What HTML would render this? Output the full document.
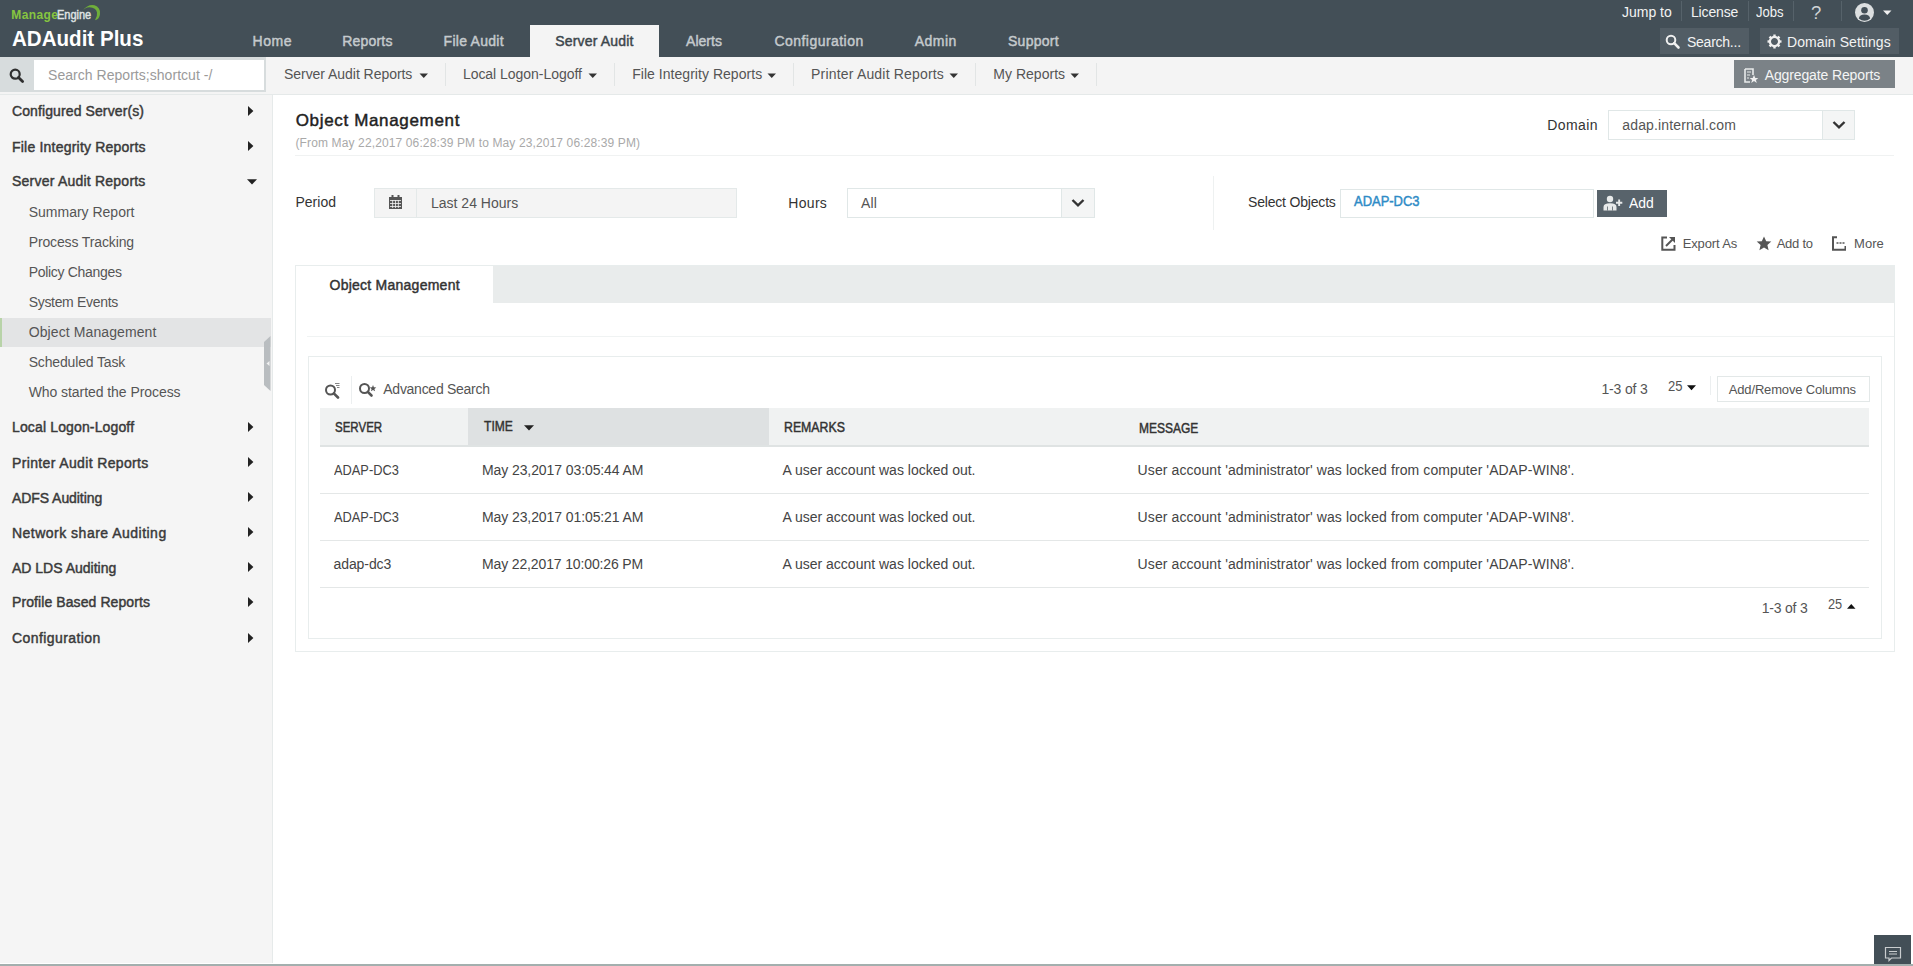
<!DOCTYPE html>
<html><head><meta charset="utf-8">
<style>
*{box-sizing:border-box;margin:0;padding:0}
html,body{width:1913px;height:966px;overflow:hidden;background:#fff;font-family:"Liberation Sans",sans-serif;color:#333}
.b{position:absolute}
.t{position:absolute;white-space:pre;line-height:1}
</style></head><body>
<!-- header -->
<div class="b" style="left:0;top:0;width:1913px;height:57px;background:#434f57"></div>
<svg class="b" style="left:80px;top:3px" width="22" height="19" viewBox="0 0 22 19"><path d="M2.4 8 Q8 0.8 14.5 2.3 Q20.5 4.2 20 11 Q19.5 16.5 15 17.2 Q17.6 13.5 17 9.5 Q16 4.5 9.5 4.2 Q5 4.5 2.4 8 Z" fill="#6fae3a"/></svg>
<div class="b" style="left:530px;top:25px;width:129px;height:32px;background:#f4f4f4"></div>
<div class="b" style="left:1681px;top:1px;width:1px;height:20px;background:#56626a"></div>
<div class="b" style="left:1748px;top:1px;width:1px;height:20px;background:#56626a"></div>
<div class="b" style="left:1793px;top:1px;width:1px;height:20px;background:#56626a"></div>
<div class="b" style="left:1841px;top:1px;width:1px;height:20px;background:#56626a"></div>
<svg class="b" style="left:1855px;top:3px" width="19" height="19" viewBox="0 0 19 19"><circle cx="9.5" cy="9.5" r="9.5" fill="#dcdfe0"/><circle cx="9.5" cy="7.3" r="3.3" fill="#434f57"/><path d="M3.8 15.5 Q4.5 11.5 9.5 11.5 Q14.5 11.5 15.2 15.5 Q12.5 17.8 9.5 17.8 Q6.5 17.8 3.8 15.5Z" fill="#434f57"/></svg>
<svg class="b" style="left:1883px;top:10px" width="9" height="6" viewBox="0 0 9 6"><path d="M0 0.5H8.5L4.25 5Z" fill="#f0f0f0"/></svg>
<div class="b" style="left:1660px;top:28px;width:89px;height:26px;background:#525d65"></div>
<svg class="b" style="left:1665px;top:34px" width="16" height="16" viewBox="0 0 16 16"><circle cx="6" cy="6" r="4.3" fill="none" stroke="#f0f0f0" stroke-width="2"/><path d="M9.2 9.2L13.5 13.5" stroke="#f0f0f0" stroke-width="2.6" stroke-linecap="round"/></svg>
<div class="b" style="left:1760px;top:28px;width:139px;height:26px;background:#525d65"></div>
<svg class="b" style="left:1767px;top:34px" width="15" height="15" viewBox="0 0 15 15"><g transform="translate(7.5 7.5)"><circle r="4.6" fill="none" stroke="#f0f0f0" stroke-width="2.2"/><g fill="#f0f0f0"><rect x="-1.2" y="-7" width="2.4" height="3"/><rect x="-1.2" y="4" width="2.4" height="3"/><rect x="-7" y="-1.2" width="3" height="2.4"/><rect x="4" y="-1.2" width="3" height="2.4"/><g transform="rotate(45)"><rect x="-1.2" y="-7" width="2.4" height="3"/><rect x="-1.2" y="4" width="2.4" height="3"/><rect x="-7" y="-1.2" width="3" height="2.4"/><rect x="4" y="-1.2" width="3" height="2.4"/></g></g></g></svg>
<!-- bar2 -->
<div class="b" style="left:0;top:57px;width:1913px;height:38px;background:#f4f4f4;border-bottom:1px solid #e5e9e9"></div>
<div class="b" style="left:0;top:57px;width:266px;height:35px;background:#d7dcdd"></div>
<div class="b" style="left:34px;top:59.5px;width:230px;height:30px;background:#fff"></div>
<svg class="b" style="left:9px;top:68px" width="16" height="16" viewBox="0 0 16 16"><circle cx="6.2" cy="6.2" r="4.5" fill="none" stroke="#2f2f2f" stroke-width="2.2"/><path d="M9.5 9.5L13.6 13.6" stroke="#2f2f2f" stroke-width="2.8" stroke-linecap="round"/></svg>
<svg class="b" style="left:419px;top:73px" width="10" height="6" viewBox="0 0 10 6"><path d="M0.5 0.5H9L4.75 5Z" fill="#333"/></svg>
<svg class="b" style="left:588px;top:73px" width="10" height="6" viewBox="0 0 10 6"><path d="M0.5 0.5H9L4.75 5Z" fill="#333"/></svg>
<svg class="b" style="left:767px;top:73px" width="10" height="6" viewBox="0 0 10 6"><path d="M0.5 0.5H9L4.75 5Z" fill="#333"/></svg>
<svg class="b" style="left:949px;top:73px" width="10" height="6" viewBox="0 0 10 6"><path d="M0.5 0.5H9L4.75 5Z" fill="#333"/></svg>
<svg class="b" style="left:1070px;top:73px" width="10" height="6" viewBox="0 0 10 6"><path d="M0.5 0.5H9L4.75 5Z" fill="#333"/></svg>
<div class="b" style="left:445px;top:63px;width:1px;height:23px;background:#e2e5e5"></div>
<div class="b" style="left:614px;top:63px;width:1px;height:23px;background:#e2e5e5"></div>
<div class="b" style="left:793px;top:63px;width:1px;height:23px;background:#e2e5e5"></div>
<div class="b" style="left:975px;top:63px;width:1px;height:23px;background:#e2e5e5"></div>
<div class="b" style="left:1096px;top:63px;width:1px;height:23px;background:#e2e5e5"></div>
<div class="b" style="left:1734px;top:60px;width:161px;height:27.5px;background:#7b8287"></div>
<svg class="b" style="left:1744px;top:68px" width="15" height="16" viewBox="0 0 15 16"><path d="M1 1H9V7M1 1V14H6" fill="none" stroke="#e8eaea" stroke-width="1.6"/><path d="M3 4H7M3 7H6M3 10H5" stroke="#e8eaea" stroke-width="1.2"/><path d="M10 7L11.3 10H14.3L11.9 11.9L12.8 15L10 13.1L7.2 15L8.1 11.9L5.7 10H8.7Z" fill="#f0f0f0"/></svg>
<!-- sidebar -->
<div class="b" style="left:0;top:95px;width:273px;height:868px;background:#f5f5f5;border-right:1px solid #e6eaea"></div>
<div class="b" style="left:0;top:318px;width:271px;height:29px;background:#e3e4e5;border-left:2px solid #b8d3a8"></div>
<svg class="b" style="left:264px;top:336px" width="7" height="55" viewBox="0 0 7 55"><path d="M0 6L6.5 0V55L0 49Z" fill="#b9bdc0"/><path d="M2.5 27.5L5.5 25V30Z" fill="#f2f2f2"/></svg>
<svg class="b" style="left:247.8px;top:105.5px" width="6" height="10" viewBox="0 0 6 10"><path d="M0 0L5.4 5L0 10Z" fill="#222"/></svg>
<svg class="b" style="left:247.8px;top:141.1px" width="6" height="10" viewBox="0 0 6 10"><path d="M0 0L5.4 5L0 10Z" fill="#222"/></svg>
<svg class="b" style="left:247.8px;top:421.5px" width="6" height="10" viewBox="0 0 6 10"><path d="M0 0L5.4 5L0 10Z" fill="#222"/></svg>
<svg class="b" style="left:247.8px;top:457.3px" width="6" height="10" viewBox="0 0 6 10"><path d="M0 0L5.4 5L0 10Z" fill="#222"/></svg>
<svg class="b" style="left:247.8px;top:492.4px" width="6" height="10" viewBox="0 0 6 10"><path d="M0 0L5.4 5L0 10Z" fill="#222"/></svg>
<svg class="b" style="left:247.8px;top:527.1px" width="6" height="10" viewBox="0 0 6 10"><path d="M0 0L5.4 5L0 10Z" fill="#222"/></svg>
<svg class="b" style="left:247.8px;top:562.2px" width="6" height="10" viewBox="0 0 6 10"><path d="M0 0L5.4 5L0 10Z" fill="#222"/></svg>
<svg class="b" style="left:247.8px;top:597.0px" width="6" height="10" viewBox="0 0 6 10"><path d="M0 0L5.4 5L0 10Z" fill="#222"/></svg>
<svg class="b" style="left:247.8px;top:632.7px" width="6" height="10" viewBox="0 0 6 10"><path d="M0 0L5.4 5L0 10Z" fill="#222"/></svg>
<svg class="b" style="left:247px;top:178.5px" width="10" height="6" viewBox="0 0 10 6"><path d="M0 0.3H10L5 5.5Z" fill="#222"/></svg>
<!-- content top -->
<div class="b" style="left:295px;top:155px;width:1599px;height:1px;background:#f0f2f2"></div>
<div class="b" style="left:1608px;top:110px;width:247px;height:30px;background:#fff;border:1px solid #e0e7e7"></div>
<div class="b" style="left:1822px;top:111px;width:32px;height:28px;background:#f4f5f5;border-left:1px solid #e0e7e7"></div>
<svg class="b" style="left:1832px;top:120px" width="14" height="10" viewBox="0 0 14 10"><path d="M1.5 2L7 7.3L12.5 2" fill="none" stroke="#333" stroke-width="2.4"/></svg>
<div class="b" style="left:374px;top:188px;width:363px;height:30px;background:#f4f4f4;border:1px solid #e4e9e9"></div>
<div class="b" style="left:416px;top:189px;width:1px;height:28px;background:#e4e9e9"></div>
<svg class="b" style="left:388.5px;top:195px" width="13" height="14" viewBox="0 0 13 14"><rect x="0" y="2" width="13" height="12" fill="#555"/><rect x="2.5" y="0" width="2" height="3.5" fill="#555"/><rect x="8.5" y="0" width="2" height="3.5" fill="#555"/><g fill="#f4f4f4"><rect x="1" y="5" width="11" height="0.8"/><rect x="1" y="8" width="11" height="0.8"/><rect x="1" y="11" width="11" height="0.8"/><rect x="3.3" y="5" width="0.8" height="8"/><rect x="6.1" y="5" width="0.8" height="8"/><rect x="8.9" y="5" width="0.8" height="8"/></g></svg>
<div class="b" style="left:847px;top:188px;width:248px;height:30px;background:#fff;border:1px solid #e0e7e7"></div>
<div class="b" style="left:1061px;top:189px;width:33px;height:28px;background:#f4f5f5;border-left:1px solid #e0e7e7"></div>
<svg class="b" style="left:1071px;top:198px" width="14" height="10" viewBox="0 0 14 10"><path d="M1.5 2L7 7.3L12.5 2" fill="none" stroke="#333" stroke-width="2.4"/></svg>
<div class="b" style="left:1213px;top:176px;width:1px;height:54px;background:#eef1f1"></div>
<div class="b" style="left:1339.5px;top:188.5px;width:254px;height:29.5px;background:#fff;border:1px solid #e0e7e7"></div>
<div class="b" style="left:1597px;top:190px;width:70px;height:27px;background:#58636b"></div>
<svg class="b" style="left:1603px;top:195px" width="20" height="17" viewBox="0 0 20 17"><circle cx="7" cy="4" r="3.2" fill="#e8eaea"/><path d="M0.5 15.5V12Q0.5 8.3 7 8.3Q13.5 8.3 13.5 12V15.5Z" fill="#e8eaea"/><path d="M4.5 11.5V15.5M9.5 11.5V15.5" stroke="#58636b" stroke-width="0.8"/><path d="M13 7.7H19.3M16.15 4.5V10.9" stroke="#e8eaea" stroke-width="1.9"/></svg>
<svg class="b" style="left:1661px;top:236px" width="15" height="15" viewBox="0 0 15 15"><path d="M6 1.5H1.3V13.7H13.5V9" fill="none" stroke="#555" stroke-width="2"/><path d="M5 10L11.5 3.5" stroke="#555" stroke-width="2"/><path d="M8 1H14V7Z" fill="#555"/></svg>
<svg class="b" style="left:1755.5px;top:236px" width="16" height="15" viewBox="0 0 16 15"><path d="M8 0.5L10.2 5.2L15.3 5.6L11.4 9L12.6 14.2L8 11.5L3.4 14.2L4.6 9L0.7 5.6L5.8 5.2Z" fill="#555"/></svg>
<svg class="b" style="left:1832px;top:236px" width="14" height="15" viewBox="0 0 14 15"><path d="M5 1.2H1V13.8H13.5V10" fill="none" stroke="#555" stroke-width="2"/><path d="M4.5 7H6.5M7.5 7H9.5M10.5 7H12.5" stroke="#555" stroke-width="1.6"/></svg>
<!-- tabs panel -->
<div class="b" style="left:295px;top:265px;width:1600px;height:387px;border:1px solid #e8eded;background:#fff"></div>
<div class="b" style="left:493px;top:266px;width:1401px;height:37px;background:#e9ecec"></div>
<div class="b" style="left:307px;top:336px;width:1587px;height:1px;background:#f0f3f3"></div>
<div class="b" style="left:308px;top:356px;width:1574px;height:283px;border:1px solid #e8eded"></div>
<svg class="b" style="left:324px;top:382px" width="17" height="17" viewBox="0 0 17 17"><circle cx="6.5" cy="8" r="4.5" fill="none" stroke="#555" stroke-width="2"/><path d="M9.8 11.3L14 15.5" stroke="#555" stroke-width="2.6" stroke-linecap="round"/><path d="M11 1.5H15.5M12 3.5H15.5M13 5.5H15.5" stroke="#777" stroke-width="0.9"/></svg>
<div class="b" style="left:351px;top:376px;width:1px;height:28px;background:#eceff0"></div>
<svg class="b" style="left:358px;top:382px" width="19" height="16" viewBox="0 0 19 16"><circle cx="6.5" cy="6.5" r="4.5" fill="none" stroke="#555" stroke-width="2"/><path d="M9.8 9.8L13.5 13.5" stroke="#555" stroke-width="2.6" stroke-linecap="round"/><path d="M15 3L15.9 5.3L18.3 5.4L16.4 6.9L17.1 9.2L15 7.9L12.9 9.2L13.6 6.9L11.7 5.4L14.1 5.3Z" fill="#555"/></svg>
<svg class="b" style="left:1687px;top:384.5px" width="9" height="6" viewBox="0 0 9 6"><path d="M0 0.3H9L4.5 5.3Z" fill="#111"/></svg>
<div class="b" style="left:1710px;top:376px;width:1px;height:19px;background:#eceff0"></div>
<div class="b" style="left:1717px;top:376px;width:153px;height:26px;border:1px solid #e3e8e8"></div>
<!-- table -->
<div class="b" style="left:320px;top:408px;width:1549px;height:39px;background:#f0f2f2;border-bottom:2px solid #dfe3e3"></div>
<div class="b" style="left:468px;top:408px;width:301px;height:37px;background:#dee1e2"></div>
<svg class="b" style="left:524px;top:424.5px" width="10" height="6" viewBox="0 0 10 6"><path d="M0 0.3H10L5 5.5Z" fill="#222"/></svg>
<div class="b" style="left:320px;top:493px;width:1549px;height:1px;background:#e4e7e7"></div>
<div class="b" style="left:320px;top:540px;width:1549px;height:1px;background:#e4e7e7"></div>
<div class="b" style="left:320px;top:587px;width:1549px;height:1px;background:#e4e7e7"></div>
<svg class="b" style="left:1847px;top:604px" width="9" height="5" viewBox="0 0 9 5"><path d="M0 4.8H8.5L4.25 0Z" fill="#111"/></svg>
<!-- bottom -->
<div class="b" style="left:1874px;top:935px;width:37px;height:31px;background:#434f57"></div>
<svg class="b" style="left:1884px;top:946px" width="18" height="16" viewBox="0 0 18 16"><path d="M1.5 1.5H16.5V12H7.5L5 14.5V12H1.5Z" fill="none" stroke="#c9cdcf" stroke-width="1.2"/><path d="M5 5.5H13M5 8H13" stroke="#c9cdcf" stroke-width="1.2"/></svg>
<div class="b" style="left:0;top:964px;width:1913px;height:2px;background:#a3afae"></div>

<div class="t" id="t0" style="left:11.30px;top:9.14px;font-size:12px;font-weight:bold;color:#86c540;letter-spacing:0.400px;">Manage</div>
<div class="t" id="t1" style="left:57.30px;top:9.14px;font-size:12px;font-weight:normal;-webkit-text-stroke:0.45px currentColor;color:#dfe2e3;letter-spacing:0.000px;transform:scaleX(0.9154);transform-origin:0 0;">Engine</div>
<div class="t" id="t2" style="left:11.50px;top:29.40px;font-size:21.5px;font-weight:bold;color:#ffffff;letter-spacing:0.000px;transform:scaleX(0.9562);transform-origin:0 0;">ADAudit Plus</div>
<div class="t" id="t3" style="left:252.60px;top:33.55px;font-size:14px;font-weight:normal;-webkit-text-stroke:0.45px currentColor;color:#c5cacd;letter-spacing:0.533px;">Home</div>
<div class="t" id="t4" style="left:342.20px;top:33.55px;font-size:14px;font-weight:normal;-webkit-text-stroke:0.45px currentColor;color:#c5cacd;letter-spacing:0.200px;">Reports</div>
<div class="t" id="t5" style="left:443.60px;top:33.55px;font-size:14px;font-weight:normal;-webkit-text-stroke:0.45px currentColor;color:#c5cacd;letter-spacing:0.267px;">File Audit</div>
<div class="t" id="t6" style="left:555.20px;top:33.55px;font-size:14px;font-weight:normal;-webkit-text-stroke:0.45px currentColor;color:#3d464c;letter-spacing:0.182px;">Server Audit</div>
<div class="t" id="t7" style="left:686.00px;top:33.55px;font-size:14px;font-weight:normal;-webkit-text-stroke:0.45px currentColor;color:#c5cacd;letter-spacing:0.040px;">Alerts</div>
<div class="t" id="t8" style="left:774.50px;top:33.55px;font-size:14px;font-weight:normal;-webkit-text-stroke:0.45px currentColor;color:#c5cacd;letter-spacing:0.450px;">Configuration</div>
<div class="t" id="t9" style="left:914.70px;top:33.55px;font-size:14px;font-weight:normal;-webkit-text-stroke:0.45px currentColor;color:#c5cacd;letter-spacing:0.500px;">Admin</div>
<div class="t" id="t10" style="left:1008.00px;top:33.55px;font-size:14px;font-weight:normal;-webkit-text-stroke:0.45px currentColor;color:#c5cacd;letter-spacing:0.267px;">Support</div>
<div class="t" id="t11" style="left:1622.00px;top:4.55px;font-size:14px;font-weight:normal;color:#f2f3f3;letter-spacing:0.000px;">Jump to</div>
<div class="t" id="t12" style="left:1691.00px;top:4.55px;font-size:14px;font-weight:normal;color:#f2f3f3;letter-spacing:-0.167px;">License</div>
<div class="t" id="t13" style="left:1755.50px;top:4.55px;font-size:14px;font-weight:normal;color:#f2f3f3;letter-spacing:0.000px;transform:scaleX(0.9343);transform-origin:0 0;">Jobs</div>
<div class="t" id="t14" style="left:1811.00px;top:3.64px;font-size:18.5px;font-weight:normal;color:#d0d4d6;letter-spacing:0.000px;">?</div>
<div class="t" id="t15" style="left:1687.00px;top:34.75px;font-size:14px;font-weight:normal;color:#f2f3f3;letter-spacing:-0.250px;">Search...</div>
<div class="t" id="t16" style="left:1787.00px;top:34.75px;font-size:14px;font-weight:normal;color:#f2f3f3;letter-spacing:0.071px;">Domain Settings</div>
<div class="t" id="t17" style="left:48.00px;top:68.15px;font-size:14px;font-weight:normal;color:#9a9a9a;letter-spacing:0.040px;">Search Reports;shortcut -/</div>
<div class="t" id="t18" style="left:284.00px;top:67.45px;font-size:14px;font-weight:normal;color:#555;letter-spacing:-0.042px;">Server Audit Reports</div>
<div class="t" id="t19" style="left:462.90px;top:67.45px;font-size:14px;font-weight:normal;color:#555;letter-spacing:-0.035px;">Local Logon-Logoff</div>
<div class="t" id="t20" style="left:632.20px;top:67.45px;font-size:14px;font-weight:normal;color:#555;letter-spacing:0.038px;">File Integrity Reports</div>
<div class="t" id="t21" style="left:811.10px;top:67.45px;font-size:14px;font-weight:normal;color:#555;letter-spacing:0.180px;">Printer Audit Reports</div>
<div class="t" id="t22" style="left:993.30px;top:67.45px;font-size:14px;font-weight:normal;color:#555;letter-spacing:0.022px;">My Reports</div>
<div class="t" id="t23" style="left:1764.70px;top:67.65px;font-size:14px;font-weight:normal;color:#f4f5f5;letter-spacing:-0.125px;">Aggregate Reports</div>
<div class="t" id="t24" style="left:12.00px;top:103.95px;font-size:14px;font-weight:normal;-webkit-text-stroke:0.45px currentColor;color:#3a3a3a;letter-spacing:0.105px;">Configured Server(s)</div>
<div class="t" id="t25" style="left:12.00px;top:139.55px;font-size:14px;font-weight:normal;-webkit-text-stroke:0.45px currentColor;color:#3a3a3a;letter-spacing:0.210px;">File Integrity Reports</div>
<div class="t" id="t26" style="left:12.00px;top:174.25px;font-size:14px;font-weight:normal;-webkit-text-stroke:0.45px currentColor;color:#3a3a3a;letter-spacing:0.221px;">Server Audit Reports</div>
<div class="t" id="t27" style="left:12.00px;top:419.95px;font-size:14px;font-weight:normal;-webkit-text-stroke:0.45px currentColor;color:#3a3a3a;letter-spacing:0.141px;">Local Logon-Logoff</div>
<div class="t" id="t28" style="left:12.00px;top:455.75px;font-size:14px;font-weight:normal;-webkit-text-stroke:0.45px currentColor;color:#3a3a3a;letter-spacing:0.360px;">Printer Audit Reports</div>
<div class="t" id="t29" style="left:12.00px;top:490.85px;font-size:14px;font-weight:normal;-webkit-text-stroke:0.45px currentColor;color:#3a3a3a;letter-spacing:-0.067px;">ADFS Auditing</div>
<div class="t" id="t30" style="left:12.00px;top:525.55px;font-size:14px;font-weight:normal;-webkit-text-stroke:0.45px currentColor;color:#3a3a3a;letter-spacing:0.486px;">Network share Auditing</div>
<div class="t" id="t31" style="left:12.00px;top:560.65px;font-size:14px;font-weight:normal;-webkit-text-stroke:0.45px currentColor;color:#3a3a3a;letter-spacing:0.000px;">AD LDS Auditing</div>
<div class="t" id="t32" style="left:12.00px;top:595.45px;font-size:14px;font-weight:normal;-webkit-text-stroke:0.45px currentColor;color:#3a3a3a;letter-spacing:0.090px;">Profile Based Reports</div>
<div class="t" id="t33" style="left:12.00px;top:631.15px;font-size:14px;font-weight:normal;-webkit-text-stroke:0.45px currentColor;color:#3a3a3a;letter-spacing:0.417px;">Configuration</div>
<div class="t" id="t34" style="left:28.70px;top:204.95px;font-size:14px;font-weight:normal;color:#555;letter-spacing:0.000px;">Summary Report</div>
<div class="t" id="t35" style="left:28.70px;top:235.15px;font-size:14px;font-weight:normal;color:#555;letter-spacing:-0.133px;">Process Tracking</div>
<div class="t" id="t36" style="left:28.70px;top:265.15px;font-size:14px;font-weight:normal;color:#555;letter-spacing:-0.308px;">Policy Changes</div>
<div class="t" id="t37" style="left:28.70px;top:295.15px;font-size:14px;font-weight:normal;color:#555;letter-spacing:-0.317px;">System Events</div>
<div class="t" id="t38" style="left:28.70px;top:325.15px;font-size:14px;font-weight:normal;color:#555;letter-spacing:0.100px;">Object Management</div>
<div class="t" id="t39" style="left:28.70px;top:355.15px;font-size:14px;font-weight:normal;color:#555;letter-spacing:-0.154px;">Scheduled Task</div>
<div class="t" id="t40" style="left:28.70px;top:385.15px;font-size:14px;font-weight:normal;color:#555;letter-spacing:-0.064px;">Who started the Process</div>
<div class="t" id="t41" style="left:295.70px;top:112.41px;font-size:17px;font-weight:normal;-webkit-text-stroke:0.45px currentColor;color:#222;letter-spacing:0.662px;">Object Management</div>
<div class="t" id="t42" style="left:295.50px;top:136.84px;font-size:12px;font-weight:normal;color:#a9a9a9;letter-spacing:0.125px;">(From May 22,2017 06:28:39 PM to May 23,2017 06:28:39 PM)</div>
<div class="t" id="t43" style="left:1547.30px;top:118.15px;font-size:14px;font-weight:normal;color:#333;letter-spacing:0.400px;">Domain</div>
<div class="t" id="t44" style="left:1622.30px;top:118.15px;font-size:14px;font-weight:normal;color:#555;letter-spacing:0.138px;">adap.internal.com</div>
<div class="t" id="t45" style="left:295.50px;top:195.45px;font-size:14px;font-weight:normal;color:#333;letter-spacing:0.000px;">Period</div>
<div class="t" id="t46" style="left:431.00px;top:196.15px;font-size:14px;font-weight:normal;color:#555;letter-spacing:0.000px;">Last 24 Hours</div>
<div class="t" id="t47" style="left:788.30px;top:195.85px;font-size:14px;font-weight:normal;color:#333;letter-spacing:0.300px;">Hours</div>
<div class="t" id="t48" style="left:861.00px;top:195.85px;font-size:14px;font-weight:normal;color:#555;letter-spacing:0.200px;">All</div>
<div class="t" id="t49" style="left:1248.00px;top:195.45px;font-size:14px;font-weight:normal;color:#333;letter-spacing:-0.185px;">Select Objects</div>
<div class="t" id="t50" style="left:1354.40px;top:194.45px;font-size:14px;font-weight:normal;-webkit-text-stroke:0.45px currentColor;color:#2e8bc6;letter-spacing:0.000px;transform:scaleX(0.9253);transform-origin:0 0;">ADAP-DC3</div>
<div class="t" id="t51" style="left:1628.70px;top:196.15px;font-size:14px;font-weight:normal;color:#ffffff;letter-spacing:0.000px;transform:scaleX(0.9954);transform-origin:0 0;">Add</div>
<div class="t" id="t52" style="left:1682.70px;top:237.00px;font-size:13px;font-weight:normal;color:#555;letter-spacing:-0.125px;">Export As</div>
<div class="t" id="t53" style="left:1776.70px;top:237.00px;font-size:13px;font-weight:normal;color:#555;letter-spacing:-0.240px;">Add to</div>
<div class="t" id="t54" style="left:1854.00px;top:237.00px;font-size:13px;font-weight:normal;color:#555;letter-spacing:0.067px;">More</div>
<div class="t" id="t55" style="left:329.50px;top:277.95px;font-size:14px;font-weight:normal;-webkit-text-stroke:0.45px currentColor;color:#333;letter-spacing:0.250px;">Object Management</div>
<div class="t" id="t56" style="left:383.30px;top:381.85px;font-size:14px;font-weight:normal;color:#555;letter-spacing:-0.271px;">Advanced Search</div>
<div class="t" id="t57" style="left:1601.40px;top:382.15px;font-size:14px;font-weight:normal;color:#555;letter-spacing:-0.143px;">1-3 of 3</div>
<div class="t" id="t58" style="left:1668.00px;top:378.75px;font-size:14px;font-weight:normal;color:#555;letter-spacing:0.000px;transform:scaleX(0.9325);transform-origin:0 0;">25</div>
<div class="t" id="t59" style="left:1728.80px;top:383.00px;font-size:13px;font-weight:normal;color:#555;letter-spacing:-0.165px;">Add/Remove Columns</div>
<div class="t" id="t60" style="left:335.00px;top:420.15px;font-size:14px;font-weight:normal;-webkit-text-stroke:0.45px currentColor;color:#333;letter-spacing:0.000px;transform:scaleX(0.8229);transform-origin:0 0;">SERVER</div>
<div class="t" id="t61" style="left:483.80px;top:418.75px;font-size:14px;font-weight:normal;-webkit-text-stroke:0.45px currentColor;color:#333;letter-spacing:0.000px;transform:scaleX(0.8631);transform-origin:0 0;">TIME</div>
<div class="t" id="t62" style="left:784.10px;top:420.15px;font-size:14px;font-weight:normal;-webkit-text-stroke:0.45px currentColor;color:#333;letter-spacing:0.000px;transform:scaleX(0.8786);transform-origin:0 0;">REMARKS</div>
<div class="t" id="t63" style="left:1139.10px;top:420.75px;font-size:14px;font-weight:normal;-webkit-text-stroke:0.45px currentColor;color:#333;letter-spacing:0.000px;transform:scaleX(0.8571);transform-origin:0 0;">MESSAGE</div>
<div class="t" id="t64" style="left:333.50px;top:463.45px;font-size:14px;font-weight:normal;color:#444;letter-spacing:0.000px;transform:scaleX(0.9155);transform-origin:0 0;">ADAP-DC3</div>
<div class="t" id="t65" style="left:482.00px;top:463.45px;font-size:14px;font-weight:normal;color:#444;letter-spacing:-0.091px;">May 23,2017 03:05:44 AM</div>
<div class="t" id="t66" style="left:782.50px;top:463.45px;font-size:14px;font-weight:normal;color:#444;letter-spacing:0.000px;">A user account was locked out.</div>
<div class="t" id="t67" style="left:1137.60px;top:463.45px;font-size:14px;font-weight:normal;color:#444;letter-spacing:0.092px;">User account 'administrator' was locked from computer 'ADAP-WIN8'.</div>
<div class="t" id="t68" style="left:333.50px;top:510.15px;font-size:14px;font-weight:normal;color:#444;letter-spacing:0.000px;transform:scaleX(0.9155);transform-origin:0 0;">ADAP-DC3</div>
<div class="t" id="t69" style="left:482.00px;top:510.15px;font-size:14px;font-weight:normal;color:#444;letter-spacing:-0.091px;">May 23,2017 01:05:21 AM</div>
<div class="t" id="t70" style="left:782.50px;top:510.15px;font-size:14px;font-weight:normal;color:#444;letter-spacing:0.000px;">A user account was locked out.</div>
<div class="t" id="t71" style="left:1137.60px;top:510.15px;font-size:14px;font-weight:normal;color:#444;letter-spacing:0.092px;">User account 'administrator' was locked from computer 'ADAP-WIN8'.</div>
<div class="t" id="t72" style="left:333.50px;top:556.85px;font-size:14px;font-weight:normal;color:#444;letter-spacing:-0.086px;">adap-dc3</div>
<div class="t" id="t73" style="left:482.00px;top:556.85px;font-size:14px;font-weight:normal;color:#444;letter-spacing:-0.136px;">May 22,2017 10:00:26 PM</div>
<div class="t" id="t74" style="left:782.50px;top:556.85px;font-size:14px;font-weight:normal;color:#444;letter-spacing:0.000px;">A user account was locked out.</div>
<div class="t" id="t75" style="left:1137.60px;top:556.85px;font-size:14px;font-weight:normal;color:#444;letter-spacing:0.092px;">User account 'administrator' was locked from computer 'ADAP-WIN8'.</div>
<div class="t" id="t76" style="left:1761.80px;top:600.65px;font-size:14px;font-weight:normal;color:#555;letter-spacing:-0.229px;">1-3 of 3</div>
<div class="t" id="t77" style="left:1828.30px;top:597.35px;font-size:14px;font-weight:normal;color:#555;letter-spacing:0.000px;transform:scaleX(0.9130);transform-origin:0 0;">25</div>
</body></html>
